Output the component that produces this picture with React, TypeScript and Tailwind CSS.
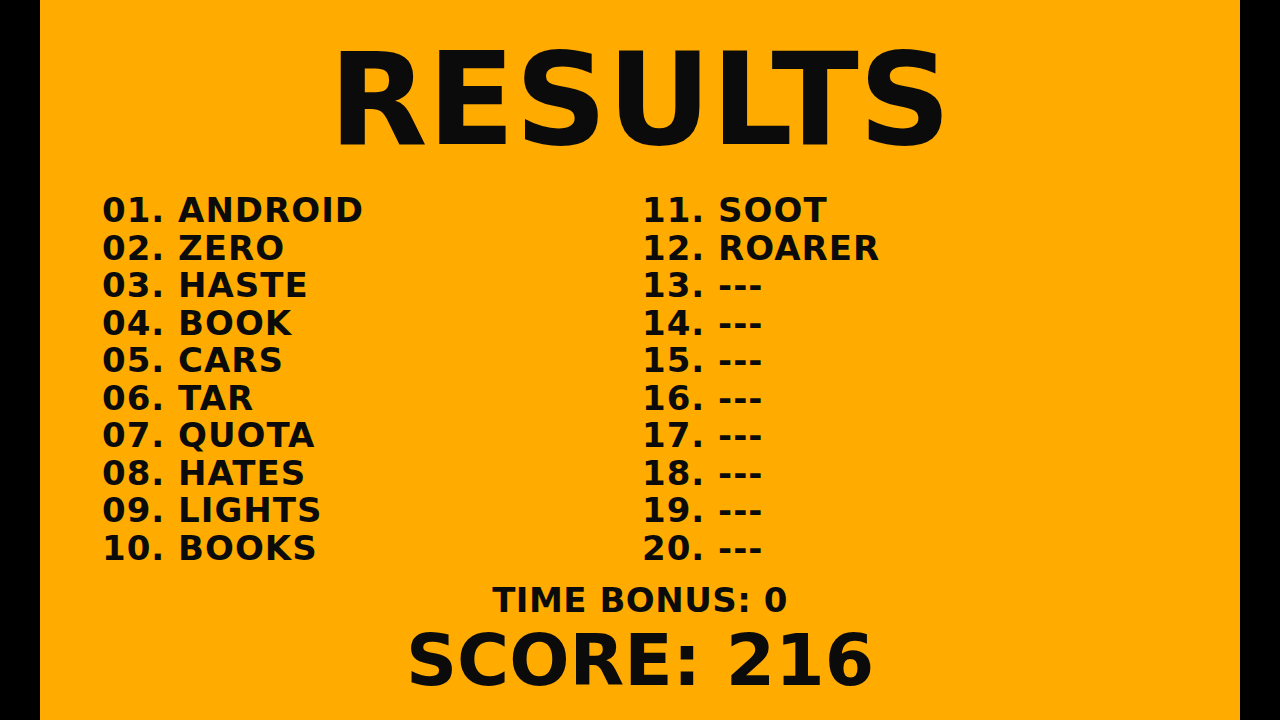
const words = [
  "ANDROID",
  "ZERO",
  "HASTE",
  "BOOK",
  "CARS",
  "TAR",
  "QUOTA",
  "HATES",
  "LIGHTS",
  "BOOKS",
  "SOOT",
  "ROARER",
];

const rows = Array.from({ length: 20 }, (_, i) => ({
  num: String(i + 1).padStart(2, "0"),
  word: words[i] ?? "---",
}));

function Row({ num, word }: { num: string; word: string }) {
  return (
    <li className="h-[37.5px] leading-[37.5px] whitespace-nowrap">
      {num}. {word}
    </li>
  );
}

export default function App() {
  return (
    <div className="w-[1280px] h-[720px] bg-black flex justify-center overflow-hidden">
      <div
        className="w-[1200px] h-[720px] bg-[#ffab00] text-[#0b0b0b] font-bold flex flex-col"
        style={{ fontFamily: '"DejaVu Sans", sans-serif' }}
      >
        {/* Title */}
        <h1 className="mt-[36px] text-center text-[128px] leading-none">RESULTS</h1>

        {/* Word list */}
        <div className="mt-[28px] pl-[62px] grid grid-cols-[540px_1fr] text-[34px] tracking-[1px]">
          <ul>
            {rows.slice(0, 10).map((r) => (
              <Row key={r.num} {...r} />
            ))}
          </ul>
          <ul>
            {rows.slice(10).map((r) => (
              <Row key={r.num} {...r} />
            ))}
          </ul>
        </div>

        {/* Totals */}
        <p className="mt-[15px] text-center text-[34px] leading-[37.5px] tracking-[0.5px]">TIME BONUS: 0</p>
        <p className="mt-[5px] text-center text-[71px] leading-none">SCORE: 216</p>
      </div>
    </div>
  );
}
